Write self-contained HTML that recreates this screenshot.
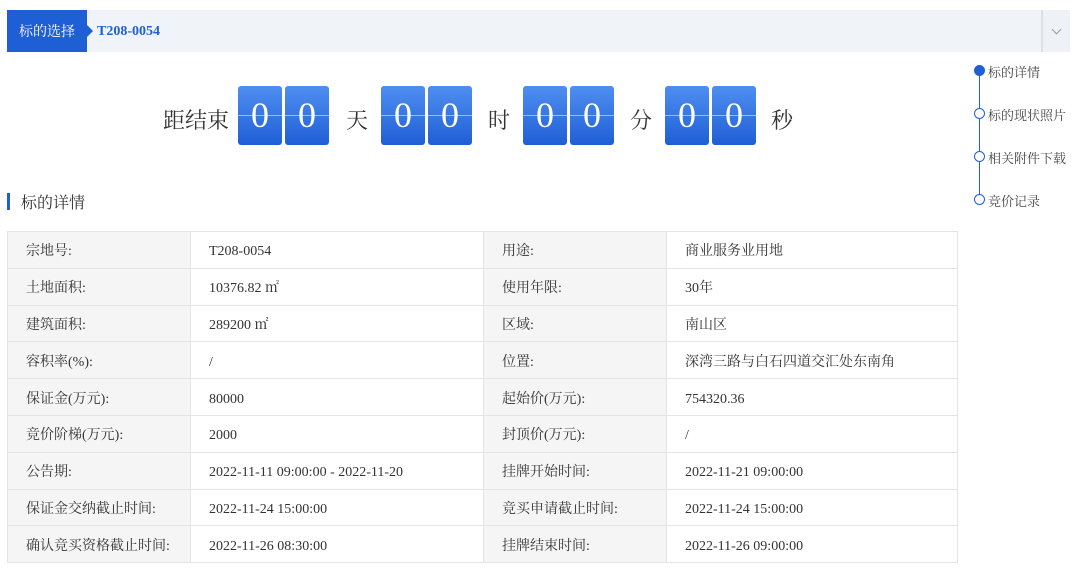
<!DOCTYPE html>
<html><head><meta charset="utf-8"><style>
*{margin:0;padding:0;box-sizing:border-box}
body{width:1080px;height:572px;background:#fff;font-family:"Liberation Serif","Noto Serif CJK SC",serif;color:#333;position:relative;overflow:hidden}
.bar{position:absolute;left:7px;top:10px;width:1063px;height:42px;background:#f0f3f7}
.tab{position:absolute;left:7px;top:10px;width:80px;height:42px;background:#1f5fd6;color:#fff;font-size:14px;line-height:46px;text-align:center}
.tab:after{content:"";position:absolute;right:-6px;top:15px;border-left:6px solid #1f5fd6;border-top:6px solid transparent;border-bottom:6px solid transparent}
.crumb{position:absolute;left:97px;top:11px;line-height:42px;font-size:14px;font-weight:bold;color:#1f5fd6}
.dd{position:absolute;left:1041px;top:10px;width:29px;height:42px;border-left:2px solid #dde1e6;background:#eef1f5}
.dd:after{content:"";position:absolute;left:10px;top:16px;width:6px;height:6px;border-right:1.3px solid #999;border-bottom:1.3px solid #999;transform:rotate(45deg)}
.t{position:absolute;font-size:22px;top:106px;line-height:30px;color:#333}
.d{position:absolute;top:86px;width:44px;height:59px;border-radius:3px;background:linear-gradient(#4f8ef0,#1f5fd6);color:#fff;font-size:36px;text-align:center;line-height:59px;font-family:"Liberation Serif",serif}
.d:after{content:"";position:absolute;left:0;right:0;top:29px;height:1px;background:rgba(255,255,255,.5)}
.sec{position:absolute;left:7px;top:193px;border-left:3px solid #1f5fd6;padding-left:11px;height:17px;line-height:17px;font-size:16px}
.sec span{position:relative;top:2px}
table{position:absolute;left:7px;top:231px;width:951px;border-collapse:collapse;font-size:14px}
td{border:1px solid #e4e4e4;height:36.8px;padding:5px 0 0 18px;line-height:20px;vertical-align:middle}
td.l{background:#f5f5f5;width:183px}
td.v{width:293px}
.nav{position:absolute;left:988px;font-size:13px;color:#444;line-height:17px}
.dot{position:absolute;left:974px;width:11px;height:11px;border:1.5px solid #1f5fd6;border-radius:50%;background:#fff}
.line{position:absolute;left:979px;top:71px;width:1px;height:130px;background:#1f5fd6}
</style></head><body>
<div class="bar"></div><div class="tab">标的选择</div><div class="crumb">T208-0054</div><div class="dd"></div>
<div class="t" style="left:163px">距结束</div>
<div class="d" style="left:238px">0</div><div class="d" style="left:285px">0</div><div class="t" style="left:346px">天</div>
<div class="d" style="left:381px">0</div><div class="d" style="left:428px">0</div><div class="t" style="left:488px">时</div>
<div class="d" style="left:523px">0</div><div class="d" style="left:570px">0</div><div class="t" style="left:630px">分</div>
<div class="d" style="left:665px">0</div><div class="d" style="left:712px">0</div><div class="t" style="left:771px">秒</div>
<div class="sec"><span>标的详情</span></div>
<div class="line"></div>
<div class="dot" style="top:65px;background:#1f5fd6"></div><div class="nav" style="top:64px">标的详情</div>
<div class="dot" style="top:108px"></div><div class="nav" style="top:107px">标的现状照片</div>
<div class="dot" style="top:151px"></div><div class="nav" style="top:150px">相关附件下载</div>
<div class="dot" style="top:194px"></div><div class="nav" style="top:193px">竞价记录</div>
<table>
<tr><td class="l">宗地号:</td><td class="v">T208-0054</td><td class="l">用途:</td><td>商业服务业用地</td></tr>
<tr><td class="l">土地面积:</td><td class="v">10376.82 ㎡</td><td class="l">使用年限:</td><td>30年</td></tr>
<tr><td class="l">建筑面积:</td><td class="v">289200 ㎡</td><td class="l">区域:</td><td>南山区</td></tr>
<tr><td class="l">容积率(%):</td><td class="v">/</td><td class="l">位置:</td><td>深湾三路与白石四道交汇处东南角</td></tr>
<tr><td class="l">保证金(万元):</td><td class="v">80000</td><td class="l">起始价(万元):</td><td>754320.36</td></tr>
<tr><td class="l">竞价阶梯(万元):</td><td class="v">2000</td><td class="l">封顶价(万元):</td><td>/</td></tr>
<tr><td class="l">公告期:</td><td class="v">2022-11-11 09:00:00 - 2022-11-20</td><td class="l">挂牌开始时间:</td><td>2022-11-21 09:00:00</td></tr>
<tr><td class="l">保证金交纳截止时间:</td><td class="v">2022-11-24 15:00:00</td><td class="l">竞买申请截止时间:</td><td>2022-11-24 15:00:00</td></tr>
<tr><td class="l">确认竞买资格截止时间:</td><td class="v">2022-11-26 08:30:00</td><td class="l">挂牌结束时间:</td><td>2022-11-26 09:00:00</td></tr>
</table>
</body></html>
